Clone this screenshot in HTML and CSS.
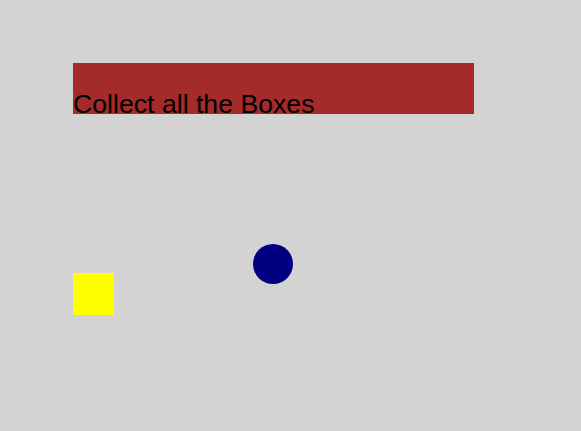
FILE: index.html
```html
<!DOCTYPE html>
<html>
<head>
<meta charset="utf-8">
<link rel="stylesheet" href="styles.css">
</head>
<body>
<div class="stage">
  <div class="banner"><span class="title">Collect all the Boxes</span></div>
  <div class="player"></div>
  <div class="box"></div>
</div>
</body>
</html>
```
FILE: styles.css
```css
html, body {
  margin: 0;
  padding: 0;
  background: #d3d3d3;
  width: 581px;
  height: 431px;
  overflow: hidden;
}
.stage {
  position: relative;
  width: 581px;
  height: 431px;
  padding: 63px 0 0 73px;
  box-sizing: border-box;
}
.banner {
  width: 401px;
  height: 51.4px;
  box-sizing: border-box;
  padding-top: 28.2px;
  background: #a52a2a;
}
.title {
  display: block;
  font-family: "Liberation Sans", Arial, sans-serif;
  font-size: 26.67px;
  line-height: 1;
  color: #000;
  white-space: nowrap;
}
.player {
  position: absolute;
  left: 253.3px;
  top: 244px;
  width: 40px;
  height: 40px;
  border-radius: 50%;
  background: #000080;
}
.box {
  position: absolute;
  left: 73px;
  top: 272.7px;
  width: 41px;
  height: 42px;
  background: #ffff00;
}
```
